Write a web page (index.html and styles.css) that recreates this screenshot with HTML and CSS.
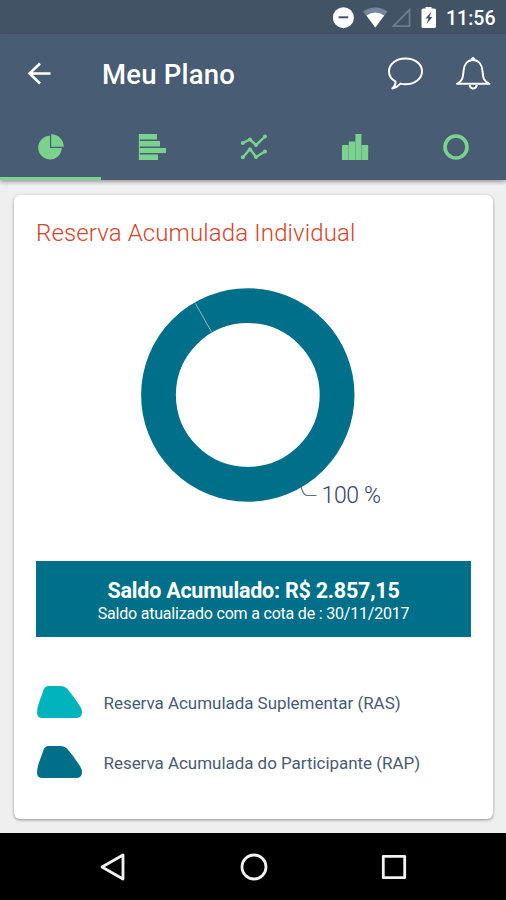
FILE: index.html
```html
<!DOCTYPE html>
<html lang="pt-BR">
<head>
  <meta charset="UTF-8">
  <meta name="viewport" content="width=device-width, initial-scale=1.0">
  <title>Meu Plano</title>
  <link rel="stylesheet" href="styles.css">
</head>
<body>

  <!-- Status bar -->
  <div class="status-bar">
    <svg class="status-icons" width="110" height="34" viewBox="330 0 110 34">
      <circle cx="343.4" cy="17.7" r="10.5" fill="#fff"/>
      <path d="M338.6 17.3h9.6" stroke="#425366" stroke-width="2"/>
      <path d="M363 11.5Q375.3 3.5 387.6 11.5L375.3 27.5z" fill="#77869a"/>
      <path d="M366.5 15.5Q375.3 9.5 384.1 15.5L375.3 27.5z" fill="#fff"/>
      <path d="M393.5 26.2h16V9.8z" fill="none" stroke="#6d7d90" stroke-width="1.8"/>
      <path d="M425.5 7h6v1.5h3q1.5 0 1.5 1.5v16.5q0 1.5-1.5 1.5h-11.5q-1.5 0-1.5-1.5V10q0-1.5 1.5-1.5h2.5z" fill="#fff"/>
      <path d="M431.5 11.5l-6 7h3l-2 5.5 6-7h-3z" fill="#425366"/>
    </svg>
    <span class="clock">11:56</span>
  </div>

  <!-- App header -->
  <div class="header">
    <div class="toolbar">
      <svg class="back" width="24" height="24" viewBox="0 0 24 24">
        <path d="M23.5 11.5H2.500M13 1.500L2.500 11.500l10.500 10" fill="none" stroke="#fff" stroke-width="2.6"/>
      </svg>
      <h1>Meu Plano</h1>
      <svg class="chat" width="36" height="36" viewBox="387 56 36 36">
        <path d="M395.5 81.500C391 79 389 75.500 389 71.500C389 64 396 58.500 405.500 58.500S422 64 422 71.300S415 84.200 405.500 84.200Q403 84.200 400.500 83.600Q397 87.500 392.300 88.500Q395.800 85.500 395.500 81.500z" fill="none" stroke="#fff" stroke-width="2" stroke-linejoin="round"/>
      </svg>
      <svg class="bell" width="36" height="36" viewBox="455 56 36 36">
        <path d="M457 83.800C463 81 463 77 463.500 71C464 64.500 467.500 60 473 60S482 64.500 482.500 71C483 77 483 81 489.500 83.800z" fill="none" stroke="#fff" stroke-width="2" stroke-linejoin="round"/>
        <path d="M471.500 59.500q1.500-3 3 0M469.500 85q1 3.500 3.700 3.500t3.700-3.500" fill="none" stroke="#fff" stroke-width="2"/>
      </svg>
    </div>
    <div class="tabs">
      <div class="tab active">
        <svg width="28" height="28" viewBox="0 0 28 28">
          <path d="M13 2.800V15h11.800A11.800 11.800 0 1 1 13 2.800z" fill="#7bd18e"/>
          <path d="M14.200 1.200V13.800h12.600A12.600 12.600 0 0 0 14.200 1.200z" fill="#7bd18e"/>
        </svg>
      </div>
      <div class="tab">
        <svg width="28" height="28" viewBox="0 0 28 28">
          <path d="M1 1h18v5.400H1zM1 8h21v5.400H1zM1 15h27v5H1zM1 21.500h19v5.500H1z" fill="#7bd18e"/>
          <path d="M1.300 1v26" stroke="#7bd18e"/>
        </svg>
      </div>
      <div class="tab">
        <svg width="28" height="28" viewBox="0 0 28 28">
          <g fill="none" stroke="#7bd18e" stroke-width="2.4">
            <path d="M2.800 10L10 6.500l6 5.500L25 3.500"/>
            <path d="M2.800 24.500L10 16l6 8L25 18.500"/>
          </g>
          <g fill="#7bd18e">
            <circle cx="2.800" cy="10" r="2"/><circle cx="10" cy="6.500" r="2"/><circle cx="16" cy="12" r="2"/><circle cx="25" cy="3.500" r="2"/>
            <circle cx="2.800" cy="24.300" r="2"/><circle cx="10" cy="16.500" r="2"/><circle cx="16" cy="24" r="2"/><circle cx="25" cy="18.500" r="2"/>
          </g>
        </svg>
      </div>
      <div class="tab">
        <svg width="28" height="28" viewBox="0 0 28 28">
          <path d="M1 12h6.500v15H1zM7.800 8.500h6.300v18.500h-6.300zM14.400 1h6v26h-6zM20.700 12h6.500v15h-6.500z" fill="#7bd18e"/>
        </svg>
      </div>
      <div class="tab">
        <svg width="28" height="28" viewBox="0 0 28 28">
          <circle cx="14" cy="14" r="11" fill="none" stroke="#7bd18e" stroke-width="3.600"/>
        </svg>
      </div>
    </div>
  </div>

  <!-- Content -->
  <div class="content">
    <div class="card">
      <h2>Reserva Acumulada Individual</h2>

      <svg class="chart" width="435" height="230" viewBox="36 282 435 230">
        <circle cx="247.800" cy="395" r="89.300" fill="none" stroke="#006f89" stroke-width="34.800"/>
        <path d="M195.500 303.500L211.500 332" stroke="#8fb5c4" stroke-width="1"/>
        <path d="M301 487q2.500 8.500 6 8.500h9.500" fill="none" stroke="#5d6f86" stroke-width="1.200"/>
        <text class="chart-label" x="321.500" y="503" textLength="59.500">100 %</text>
      </svg>

      <div class="balance">
        <p class="balance-value">Saldo Acumulado: R$ 2.857,15</p>
        <p class="balance-date">Saldo atualizado com a cota de : 30/11/2017</p>
      </div>

      <div class="legend">
        <div class="legend-item">
          <svg class="ras" width="46" height="34" viewBox="0 0 46 34">
            <path d="M12.500 1H25q3.500 0 6 2.500Q38 11.500 44.500 22q1.500 2.500 1.500 5 0 6-6 6H6.500Q1 33 1 27.500q0-4 1.500-8.500L7.500 5Q9 1 12.500 1z"/>
          </svg>
          <span>Reserva Acumulada Suplementar (RAS)</span>
        </div>
        <div class="legend-item">
          <svg class="rap" width="46" height="34" viewBox="0 0 46 34">
            <path d="M12.500 1H25q3.500 0 6 2.500Q38 11.500 44.500 22q1.500 2.500 1.500 5 0 6-6 6H6.500Q1 33 1 27.500q0-4 1.500-8.500L7.500 5Q9 1 12.500 1z"/>
          </svg>
          <span>Reserva Acumulada do Participante (RAP)</span>
        </div>
      </div>
    </div>
  </div>

  <!-- Navigation bar -->
  <div class="nav-bar">
    <svg width="28" height="28" viewBox="0 0 28 28"><path d="M24 2v24L3 14z"/></svg>
    <svg width="28" height="28" viewBox="0 0 28 28"><circle cx="14" cy="14" r="12"/></svg>
    <svg width="28" height="28" viewBox="0 0 28 28"><path d="M3.300 3.300h21.400v21.400H3.300z"/></svg>
  </div>

</body>
</html>
```

FILE: styles.css
```css
body {
  font-family: Roboto, "Liberation Sans", sans-serif;
  margin: 0;
  background-color: #efefef;
  display: flex;
  flex-direction: column;
  height: 900px;
  overflow: hidden;
}
h1, h2, p {
  margin: 0;
}
svg {
  display: block;
  flex-shrink: 0;
}
.status-bar {
  height: 34px;
  background-color: #425366;
  display: flex;
  justify-content: flex-end;
  align-items: center;
  padding-right: 11px;
  flex-shrink: 0;
}
.clock {
  font-size: 19.5px;
  font-weight: 500;
  line-height: 34px;
  color: #fff;
  width: 49px;
  margin-left: 6px;
  padding-top: 3px;
  white-space: nowrap;
}
.header {
  height: 146px;
  background-color: #485c73;
  box-shadow: 0 2px 4px rgba(0, 0, 0, 0.35);
  flex-shrink: 0;
}
.toolbar {
  height: 79px;
  display: flex;
  align-items: center;
  padding: 0 15px 0 27px;
}
.toolbar h1 {
  flex: 1;
  margin-left: 51px;
  padding-top: 1px;
  font-size: 27.5px;
  letter-spacing: 0.2px;
  font-weight: 500;
  color: #fff;
}
.bell {
  margin-left: 32px;
}
.tabs {
  display: flex;
  height: 67px;
}
.tab {
  flex: 1;
  display: flex;
  justify-content: center;
  align-items: center;
  box-sizing: border-box;
  padding: 3px 0 0 1px;
  border-bottom: 3px solid transparent;
}
.tab.active {
  border-bottom-color: #7bd18e;
}
.content {
  flex: 1;
  padding: 15px 13px 14px 14px;
  display: flex;
}
.card {
  flex: 1;
  background-color: #fff;
  border-radius: 6px;
  box-shadow: 0 1px 3px rgba(0, 0, 0, 0.4);
  padding: 0 22px;
}
.card h2 {
  padding-top: 23px;
  font-size: 24px;
  font-weight: 300;
  letter-spacing: 0.13px;
  line-height: 30px;
  color: #d4452c;
}
.chart {
  margin-top: 34px;
}
.chart-label {
  font-size: 23px;
  fill: #34435f;
  font-weight: 300;
}
.balance {
  margin-top: 49px;
  height: 76px;
  box-sizing: border-box;
  padding-top: 17px;
  background-color: #006f89;
  color: #fff;
  text-align: center;
}
.balance-value {
  font-size: 21.5px;
  font-weight: 700;
  letter-spacing: -0.22px;
  line-height: 26px;
}
.balance-date {
  font-size: 16px;
  letter-spacing: -0.2px;
  line-height: 20px;
}
.legend {
  margin-top: 48px;
  display: flex;
  flex-direction: column;
  gap: 26px;
}
.legend-item {
  display: flex;
  align-items: center;
  gap: 21.5px;
  font-size: 17px;
  letter-spacing: -0.04px;
  color: #4a5a72;
}
.legend-item span {
  padding-top: 1px;
}
.ras {
  fill: #00b3bd;
}
.rap {
  fill: #006f89;
}
.nav-bar {
  height: 67px;
  background-color: #000;
  display: flex;
  justify-content: center;
  align-items: center;
  gap: 112.5px;
  padding-left: 1px;
  flex-shrink: 0;
}
.nav-bar svg {
  fill: none;
  stroke: #f2f2f2;
  stroke-width: 2.8;
  stroke-linejoin: round;
}
```
